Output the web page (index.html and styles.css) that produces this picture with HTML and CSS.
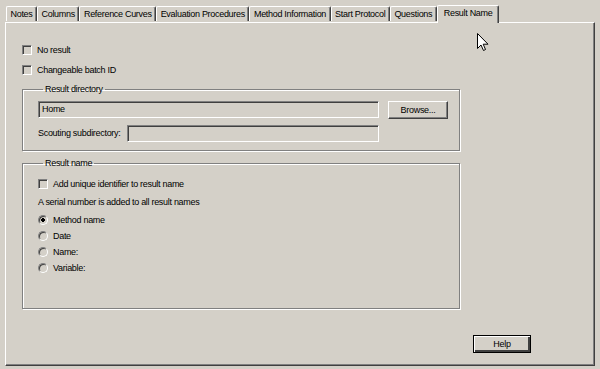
FILE: index.html
```html
<!DOCTYPE html>
<html lang="en">
<head>
    <meta charset="UTF-8">
    <title>Result Name</title>
    <link rel="stylesheet" href="styles.css">
</head>
<body>
    <div class="window">
        <div class="tabs">
            <div class="tab">Notes</div>
            <div class="tab">Columns</div>
            <div class="tab">Reference Curves</div>
            <div class="tab">Evaluation Procedures</div>
            <div class="tab">Method Information</div>
            <div class="tab">Start Protocol</div>
            <div class="tab">Questions</div>
            <div class="tab active">Result Name</div>
        </div>

        <div class="panel">
            <div class="check-row"><span class="check"></span>No result</div>
            <div class="check-row"><span class="check"></span>Changeable batch ID</div>

            <fieldset class="group dir-group">
                <legend>Result directory</legend>
                <div class="dir-grid">
                    <div class="field wide">Home</div>
                    <button class="btn">Browse...</button>
                    <label class="field-label">Scouting subdirectory:</label>
                    <div class="field"></div>
                </div>
            </fieldset>

            <fieldset class="group name-group">
                <legend>Result name</legend>
                <div class="check-row"><span class="check"></span>Add unique identifier to result name</div>
                <div class="note">A serial number is added to all result names</div>
                <div class="radios">
                    <div class="check-row"><span class="radio on"></span>Method name</div>
                    <div class="check-row"><span class="radio"></span>Date</div>
                    <div class="check-row"><span class="radio"></span>Name:</div>
                    <div class="check-row"><span class="radio"></span>Variable:</div>
                </div>
            </fieldset>

            <div class="footer">
                <button class="btn default">Help</button>
            </div>
        </div>
    </div>

    <svg class="cursor" width="13" height="19" viewBox="0 0 13 19">
        <path d="M0.5 0.5 L0.5 15.5 L4 12 L6.5 17.5 L8.5 16.5 L6.2 11.2 L11 11.2 Z" fill="#fff" stroke="#000" stroke-width="1"/>
    </svg>
</body>
</html>
```

FILE: styles.css
```css
body {
    margin: 0;
    background: #d4d0c8;
    font-family: "Liberation Sans", Arial, sans-serif;
    font-size: 9px;
    letter-spacing: -0.3px;
    color: #000;
    width: 600px;
    height: 369px;
    overflow: hidden;
    white-space: nowrap;
}
.window {
    padding: 5px 5px 0 5px;
}
.tabs {
    display: flex;
    align-items: flex-end;
    height: 17px;
    padding-left: 1px;
    position: relative;
    z-index: 1;
}
.tab {
    flex-shrink: 0;
    height: 14px;
    line-height: 14px;
    padding: 0 3.5px;
    border-top: 1px solid #fff;
    border-left: 1px solid #fff;
    border-right: 1px solid #404040;
    box-shadow: inset -1px 0 0 #808080;
    border-radius: 2px 2px 0 0;
    margin-bottom: 1px;
}
.tab.active {
    height: 17px;
    line-height: 15px;
    margin-bottom: -1px;
    background: #d4d0c8;
    padding: 0 6px;
}
.panel {
    height: 344px;
    box-sizing: border-box;
    border-top: 1px solid #fff;
    border-left: 1px solid #fff;
    border-right: 1px solid #404040;
    border-bottom: 1px solid #404040;
    box-shadow: inset -1px -1px 0 #808080;
    padding: 20px 0 0 16px;
    display: flex;
    flex-direction: column;
}
.check-row {
    display: flex;
    align-items: center;
    height: 13px;
    gap: 5px;
}
.check-row + .check-row {
    margin-top: 7px;
}
.check {
    width: 8px;
    height: 8px;
    border-top: 1px solid #808080;
    border-left: 1px solid #808080;
    border-right: 1px solid #fff;
    border-bottom: 1px solid #fff;
    box-shadow: inset 1px 1px 0 #404040;
    background: #d4d0c8;
}
.radio {
    width: 10px;
    height: 10px;
    border-radius: 50%;
    box-sizing: border-box;
    border: 1px solid;
    border-color: #808080 #fff #fff #808080;
    box-shadow: inset 1px 1px 0 #404040;
    background: #d4d0c8;
}
.radio.on {
    background: radial-gradient(circle, #000 0 1.6px, #d4d0c8 2.1px);
}
.group {
    margin: 7px 0 0 0;
    width: 438px;
    box-sizing: border-box;
    border: 1px solid #808080;
    box-shadow: inset 1px 1px 0 #fff, 1px 1px 0 #fff;
    padding: 5px 15px 8px 15px;
    min-width: 0;
}
.group legend {
    padding: 0 2px;
    margin-left: 5px;
    line-height: 13px;
}
.dir-grid {
    display: grid;
    grid-template-columns: 89px 252px 69px;
    grid-template-rows: 18px 17px;
    row-gap: 6px;
}
.field {
    box-sizing: border-box;
    height: 17px;
    border-top: 1px solid #808080;
    border-left: 1px solid #808080;
    border-right: 1px solid #fff;
    border-bottom: 1px solid #fff;
    box-shadow: inset 1px 1px 0 #404040;
    padding: 0 3px;
    line-height: 15px;
}
.field.wide {
    grid-column: 1 / 3;
}
.field-label {
    line-height: 17px;
}
.btn {
    font: inherit;
    letter-spacing: inherit;
    color: #000;
    background: #d4d0c8;
    margin: 0 0 0 9px;
    padding: 0;
    height: 18px;
    box-sizing: border-box;
    border: 1px solid;
    border-color: #fff #404040 #404040 #fff;
    box-shadow: inset -1px -1px 0 #808080;
}
.btn.default {
    margin: 0;
    width: 58px;
    border: 1px solid #000;
    box-shadow: inset 1px 1px 0 #fff, inset -2px -2px 0 #404040;
}
.name-group {
    margin-top: 6px;
    padding: 7px 15px 34px 15px;
}
.note {
    margin-top: 6px;
    line-height: 13px;
}
.radios {
    margin-top: 4px;
}
.radios .check-row + .check-row {
    margin-top: 3px;
}
.footer {
    margin-top: 26px;
    display: flex;
    justify-content: flex-end;
    padding-right: 63px;
}
.cursor {
    position: absolute;
    left: 477px;
    top: 33px;
}
```
